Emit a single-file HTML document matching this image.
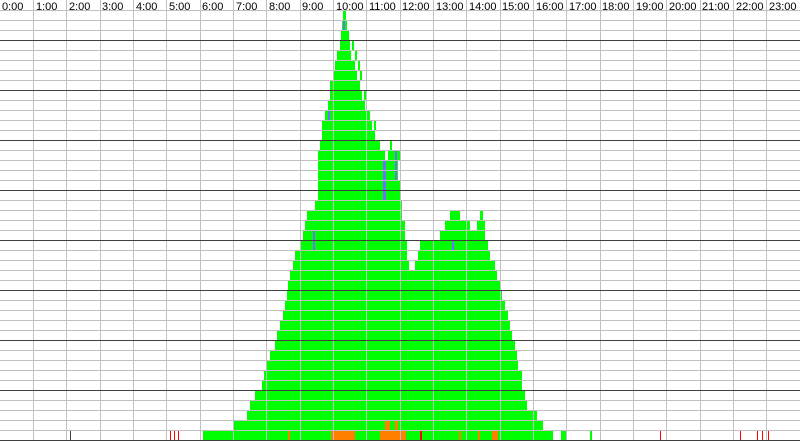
<!DOCTYPE html>
<html><head><style>
html,body{margin:0;padding:0;background:#fff;width:800px;height:441px;overflow:hidden}
svg{display:block}
text{font-family:"Liberation Sans",sans-serif;font-size:11px;fill:#000}
</style></head><body>
<svg width="800" height="441" viewBox="0 0 800 441" xmlns="http://www.w3.org/2000/svg">
<rect width="800" height="441" fill="#fff"/>
<g fill="#00ff00">
<rect x="343" y="10" width="3" height="10"/>
<rect x="342" y="20" width="5" height="10"/>
<rect x="341" y="30" width="8" height="10"/>
<rect x="340" y="40" width="10" height="10"/><rect x="352" y="40" width="2" height="10"/>
<rect x="337" y="50" width="14" height="10"/><rect x="355" y="50" width="2" height="10"/>
<rect x="335" y="60" width="20" height="10"/><rect x="358" y="60" width="2" height="10"/>
<rect x="333" y="70" width="24" height="10"/><rect x="360" y="70" width="2" height="10"/>
<rect x="330" y="80" width="30" height="10"/>
<rect x="330" y="90" width="32" height="10"/><rect x="364" y="90" width="2" height="10"/>
<rect x="328" y="100" width="37" height="10"/>
<rect x="325" y="110" width="45" height="10"/>
<rect x="322" y="120" width="50" height="10"/><rect x="374" y="120" width="2" height="10"/>
<rect x="322" y="130" width="53" height="10"/>
<rect x="320" y="140" width="60" height="10"/><rect x="390" y="140" width="2" height="10"/>
<rect x="318" y="150" width="67" height="10"/><rect x="388" y="150" width="12" height="10"/>
<rect x="318" y="160" width="80" height="10"/>
<rect x="318" y="170" width="80" height="10"/>
<rect x="318" y="180" width="82" height="10"/>
<rect x="318" y="190" width="82" height="10"/>
<rect x="315" y="200" width="87" height="10"/>
<rect x="307" y="210" width="95" height="10"/><rect x="450" y="210" width="10" height="10"/><rect x="480" y="210" width="3" height="10"/>
<rect x="305" y="220" width="100" height="10"/><rect x="445" y="220" width="25" height="10"/><rect x="477" y="220" width="8" height="10"/>
<rect x="303" y="230" width="102" height="10"/><rect x="440" y="230" width="45" height="10"/>
<rect x="300" y="240" width="107" height="10"/><rect x="420" y="240" width="68" height="10"/>
<rect x="295" y="250" width="112" height="10"/><rect x="418" y="250" width="72" height="10"/>
<rect x="293" y="260" width="116" height="10"/><rect x="415" y="260" width="80" height="10"/>
<rect x="290" y="270" width="207" height="10"/>
<rect x="288" y="280" width="212" height="10"/>
<rect x="287" y="290" width="215" height="10"/>
<rect x="285" y="300" width="220" height="10"/>
<rect x="283" y="310" width="225" height="10"/>
<rect x="280" y="320" width="230" height="10"/>
<rect x="277" y="330" width="235" height="10"/>
<rect x="275" y="340" width="240" height="10"/>
<rect x="270" y="350" width="247" height="10"/>
<rect x="267" y="360" width="251" height="10"/>
<rect x="264" y="370" width="258" height="10"/>
<rect x="262" y="380" width="260" height="10"/>
<rect x="255" y="390" width="270" height="10"/>
<rect x="250" y="400" width="277" height="10"/>
<rect x="247" y="410" width="290" height="10"/>
<rect x="233" y="420" width="310" height="10"/>
<rect x="203" y="430" width="350" height="10"/><rect x="561" y="430" width="5" height="10"/><rect x="590" y="430" width="2" height="10"/>
</g>
<g fill="#7070ff">
<rect x="343" y="20" width="2" height="10"/>
<rect x="328" y="110" width="2" height="10"/>
<rect x="383" y="160" width="3" height="40"/>
<rect x="395" y="150" width="2" height="30"/>
<rect x="313" y="230" width="2" height="20"/>
<rect x="452" y="240" width="2" height="10"/>
</g>
<g fill="#ff8000">
<rect x="288" y="431" width="2" height="9"/>
<rect x="331" y="431" width="24" height="9"/>
<rect x="380" y="431" width="26" height="9"/>
<rect x="385" y="421" width="5" height="9"/>
<rect x="395" y="421" width="3" height="9"/>
<rect x="459" y="431" width="2" height="9"/>
<rect x="492" y="431" width="6" height="9"/>
<rect x="478" y="431" width="2" height="9"/>
</g>
<g fill="#ff0000">
<rect x="420" y="431" width="2" height="9"/>
<rect x="170" y="431" width="1" height="9"/><rect x="174" y="431" width="1" height="9"/><rect x="178" y="431" width="1" height="9"/>
<rect x="660" y="431" width="1" height="9"/><rect x="740" y="431" width="1" height="9"/>
<rect x="757" y="431" width="1" height="9"/><rect x="762" y="431" width="1" height="9"/><rect x="768" y="431" width="1" height="9"/>
</g>
<rect x="70" y="431" width="1" height="9" fill="#444"/>
<g stroke="#c0c0c0" stroke-width="1" shape-rendering="crispEdges">
<path d="M0 10.5H800M0 20.5H800M0 30.5H800M0 50.5H800M0 60.5H800M0 70.5H800M0 80.5H800M0 100.5H800M0 110.5H800M0 120.5H800M0 130.5H800M0 150.5H800M0 160.5H800M0 170.5H800M0 180.5H800M0 200.5H800M0 210.5H800M0 220.5H800M0 230.5H800M0 250.5H800M0 260.5H800M0 270.5H800M0 280.5H800M0 300.5H800M0 310.5H800M0 320.5H800M0 330.5H800M0 350.5H800M0 360.5H800M0 370.5H800M0 380.5H800M0 400.5H800M0 410.5H800M0 420.5H800M0 430.5H800"/>
<path d="M33.5 0V440M66.5 0V440M100.5 0V440M133.5 0V440M166.5 0V440M200.5 0V440M233.5 0V440M266.5 0V440M300.5 0V440M333.5 0V440M366.5 0V440M400.5 0V440M433.5 0V440M466.5 0V440M500.5 0V440M533.5 0V440M566.5 0V440M600.5 0V440M633.5 0V440M666.5 0V440M700.5 0V440M733.5 0V440M766.5 0V440"/>
</g>
<g stroke="#404040" stroke-width="1" shape-rendering="crispEdges">
<path d="M0 40.5H800M0 90.5H800M0 140.5H800M0 190.5H800M0 240.5H800M0 290.5H800M0 340.5H800M0 390.5H800M0 440.5H800"/>
</g>
<g>
<text x="2" y="10">0:00</text><text x="36" y="10">1:00</text><text x="69" y="10">2:00</text><text x="102" y="10">3:00</text><text x="136" y="10">4:00</text><text x="169" y="10">5:00</text><text x="202" y="10">6:00</text><text x="236" y="10">7:00</text><text x="269" y="10">8:00</text><text x="302" y="10">9:00</text><text x="336" y="10">10:00</text><text x="369" y="10">11:00</text><text x="402" y="10">12:00</text><text x="436" y="10">13:00</text><text x="469" y="10">14:00</text><text x="502" y="10">15:00</text><text x="536" y="10">16:00</text><text x="569" y="10">17:00</text><text x="602" y="10">18:00</text><text x="636" y="10">19:00</text><text x="669" y="10">20:00</text><text x="702" y="10">21:00</text><text x="736" y="10">22:00</text><text x="769" y="10">23:00</text>
</g>
</svg>
</body></html>
